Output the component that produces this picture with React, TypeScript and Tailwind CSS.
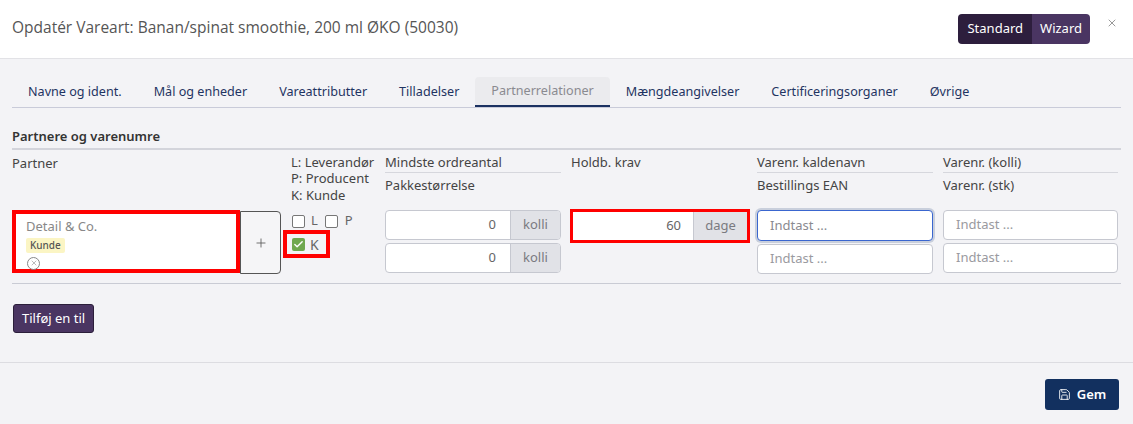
import React from 'react';
import { Save, Plus, Check, X } from 'lucide-react';

const tabs = [
  'Navne og ident.',
  'Mål og enheder',
  'Vareattributter',
  'Tilladelser',
  'Partnerrelationer',
  'Mængdeangivelser',
  'Certificeringsorganer',
  'Øvrige',
];

const AddonInput: React.FC<{ value: string; unit: string }> = ({ value, unit }) => (
  <div className="flex h-[30px] rounded-[4px] border border-[#c6c8d0] overflow-hidden bg-white">
    <div className="flex-1 flex items-center justify-end pr-[14px] text-[13px] text-[#666]">{value}</div>
    <div className="w-[50px] flex items-center justify-center bg-[#e1e2e7] border-l border-[#c6c8d0] text-[13px] text-[#7a7a80]">
      {unit}
    </div>
  </div>
);

const TextInput: React.FC<{ focused?: boolean }> = ({ focused }) => (
  <div
    className={
      focused
        ? 'h-[31px] rounded-[4px] border border-[#3a66cf] shadow-[0_0_0_2px_#c9cfdc] bg-white flex items-center pl-[12px] text-[13px] text-[#8a8a90]'
        : 'h-[30px] rounded-[4px] border border-[#c6c8d0] bg-white flex items-center pl-[12px] text-[13px] text-[#9a9aa0]'
    }
  >
    Indtast ...
  </div>
);

const Box: React.FC = () => (
  <span className="inline-block w-[13px] h-[13px] rounded-[2px] border border-[#777] bg-white" />
);

export default function App() {
  return (
    <div className="w-[1133px] h-[424px] flex flex-col bg-[#f3f3f6] text-[#444] font-['Noto_Sans',sans-serif] overflow-hidden">
      {/* Header */}
      <div className="h-[59px] shrink-0 bg-white border-b border-[#e2e2e6] flex items-center justify-between pl-[12px] pr-[15px]">
        <div className="text-[15.5px] text-[#555] font-['Open_Sans',sans-serif] pb-[2px]">
          Opdatér Vareart: Banan/spinat smoothie, 200 ml ØKO (50030)
        </div>
        <div className="flex items-center gap-[16px]">
          <div className="flex h-[30px] rounded-[4px] overflow-hidden text-[13px] text-white">
            <div className="bg-[#2d1e3d] px-[9px] flex items-center">Standard</div>
            <div className="bg-[#4a3562] px-[8px] flex items-center">Wizard</div>
          </div>
          <X size={12} strokeWidth={2} className="text-[#999] -mt-[12px]" />
        </div>
      </div>

      {/* Body */}
      <div className="px-[12px] pt-[18px]">
        <div className="flex border-b border-[#c9cbd9] h-[31px]">
          {tabs.map((t) => (
            <div
              key={t}
              className={
                t === 'Partnerrelationer'
                  ? 'px-[16px] flex items-center text-[12.6px] text-[#8a8a90] bg-[#ebebee] border-b-2 border-[#1b3161] rounded-t-[4px]'
                  : 'px-[16px] flex items-center text-[12.6px] text-[#1f3462]'
              }
            >
              {t}
            </div>
          ))}
        </div>

        <div className="mt-[19px] pb-[1px] border-b-2 border-[#d3d4db] text-[13px] font-semibold text-[#333]">
          Partnere og varenumre
        </div>

        <div className="grid grid-cols-[269px_84px_176px_176px_176px_175px] gap-x-[10px] mt-[3px] text-[13px] text-[#444]">
          {/* Header row */}
          <div className="pt-[1px]">Partner</div>
          <div className="leading-[16.5px] pt-[1px] whitespace-nowrap">
            L: Leverandør
            <br />
            P: Producent
            <br />
            K: Kunde
          </div>
          <div>
            <div className="h-[20px] border-b border-[#d6d7dd]">Mindste ordreantal</div>
            <div className="pt-[3px]">Pakkestørrelse</div>
          </div>
          <div>Holdb. krav</div>
          <div>
            <div className="h-[20px] border-b border-[#d6d7dd]">Varenr. kaldenavn</div>
            <div className="pt-[3px]">Bestillings EAN</div>
          </div>
          <div>
            <div className="h-[20px] border-b border-[#d6d7dd]">Varenr. (kolli)</div>
            <div className="pt-[3px]">Varenr. (stk)</div>
          </div>

          {/* Input row */}
          <div className="mt-[7px] flex">
            <div className="w-[228px] h-[63px] border-[4px] border-[#ff0000] bg-white pl-[10px] pt-[3px]">
              <div className="text-[13px] text-[#888] leading-[18px]">Detail &amp; Co.</div>
              <div className="mt-[3px] inline-block bg-[#fbf5c4] text-[10px] font-medium text-[#555] px-[4px] leading-[15px] rounded-[2px] align-top">
                Kunde
              </div>
              <div className="mt-[2px] ml-[1px] w-[13px] h-[13px] rounded-full border border-[#888] flex items-center justify-center">
                <X size={8} strokeWidth={1.5} className="text-[#777]" />
              </div>
            </div>
            <div className="w-[41px] h-[63px] mt-[1px] border border-[#555] rounded-r-[4px] bg-[#f5f5f7] flex items-center justify-center">
              <Plus size={14} strokeWidth={1.4} className="text-[#555]" />
            </div>
          </div>
          <div className="mt-[11px] -ml-[8px]">
            <div className="flex items-center gap-[7px] pl-[9px] h-[14px] text-[13px] text-[#666]">
              <Box />
              <span className="-ml-[1px]">L</span>
              <Box />
              <span>P</span>
            </div>
            <div className="mt-[2px] w-[47px] h-[28px] border-[4px] border-[#ff0000] flex items-center gap-[5px] pl-[5px] text-[14px] text-[#666]">
              <span className="w-[13px] h-[13px] rounded-[2px] bg-[#6fa84f] flex items-center justify-center">
                <Check size={11} strokeWidth={3} className="text-white" />
              </span>
              K
            </div>
          </div>
          <div className="mt-[7px] flex flex-col gap-[3px]">
            <AddonInput value="0" unit="kolli" />
            <AddonInput value="0" unit="kolli" />
          </div>
          <div className="mt-[6px] -ml-[1px] w-[180px]">
            <div className="border-[3px] border-[#ff0000] bg-[#ff0000]">
              <div className="flex h-[28px] bg-white">
                <div className="flex-1 flex items-center justify-end pr-[12px] text-[13px] text-[#666]">60</div>
                <div className="w-[54px] flex items-center justify-center bg-[#e1e2e7] border-l border-[#c6c8d0] text-[13px] text-[#7a7a80]">
                  dage
                </div>
              </div>
            </div>
          </div>
          <div className="mt-[7px] flex flex-col gap-[3px]">
            <TextInput focused />
            <TextInput />
          </div>
          <div className="mt-[7px] flex flex-col gap-[3px]">
            <TextInput />
            <TextInput />
          </div>
        </div>

        <div className="mt-[9px] border-b border-[#c9cbd4]" />

        <div className="pt-[20px] pb-[29px]">
          <button className="h-[29px] px-[8px] ml-[1px] rounded-[3px] bg-[#4a3562] border border-[#2b1e3a] text-[13px] text-white">
            Tilføj en til
          </button>
        </div>
      </div>

      {/* Footer */}
      <div className="border-t border-[#dcdce1] flex justify-end pr-[14px] pt-[16px]">
        <button className="h-[31px] w-[74px] rounded-[3px] bg-[#12305f] flex items-center justify-center gap-[6px] text-[13px] font-semibold text-white">
          <Save size={13} strokeWidth={1.6} />
          Gem
        </button>
      </div>
    </div>
  );
}
